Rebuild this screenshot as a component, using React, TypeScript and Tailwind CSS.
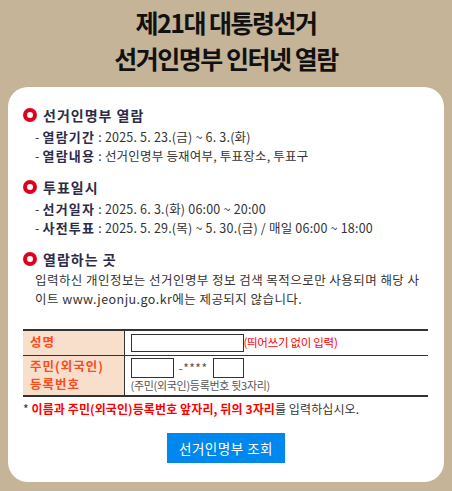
import React from "react";

const font = { fontFamily: '"Noto Sans CJK KR", "Noto Sans", sans-serif' };

function Dot() {
  return (
    <span className="inline-block w-[14px] h-[14px] rounded-full border-[4px] border-[#e1001e] bg-white shrink-0" />
  );
}

function Heading({ children }: { children: React.ReactNode }) {
  return (
    <h3 className="flex items-center gap-[6px] text-[14px] font-bold text-[#2c2c48] tracking-[1px] leading-[20px]">
      <Dot />
      {children}
    </h3>
  );
}

function Item({ label, value }: { label: string; value: string }) {
  return (
    <li className="pl-[12px] text-[12.5px] leading-[19px] text-[#333] tracking-[0.2px]">
      - <b className="text-[#2c2c48] text-[13px] tracking-[1.2px]">{label}</b>
      <span className="px-[3px]">:</span>
      {value}
    </li>
  );
}

export default function App() {
  return (
    <div className="w-[452px] h-[491px] bg-[#c5b497] overflow-hidden" style={font}>
      <div className="pt-[4px] text-center text-[#111] font-bold text-[25px] leading-[36px] tracking-[-1.5px]">
        <p>제21대 대통령선거</p>
        <p>선거인명부 인터넷 열람</p>
      </div>

      <div className="mx-[8px] mt-[11px] h-[395px] bg-white rounded-[20px] px-[15px] pt-[18px]">
        <Heading>선거인명부 열람</Heading>
        <ul className="mt-[2px]">
          <Item label="열람기간" value="2025. 5. 23.(금) ~ 6. 3.(화)" />
          <Item label="열람내용" value="선거인명부 등재여부, 투표장소, 투표구" />
        </ul>

        <div className="mt-[12px]">
          <Heading>투표일시</Heading>
        </div>
        <ul className="mt-[2px]">
          <Item label="선거일자" value="2025. 6. 3.(화) 06:00 ~ 20:00" />
          <Item label="사전투표" value="2025. 5. 29.(목) ~ 5. 30.(금) / 매일 06:00 ~ 18:00" />
        </ul>

        <div className="mt-[12px]">
          <Heading>열람하는 곳</Heading>
        </div>
        <p className="mt-[1px] pl-[12px] pr-[2px] text-[12.5px] leading-[19px] text-[#333] tracking-[0.45px]">
          입력하신 개인정보는 선거인명부 정보 검색 목적으로만 사용되며 해당 사이트 www.jeonju.go.kr에는 제공되지 않습니다.
        </p>

        <table className="mt-[21px] w-[405px] border-collapse border-t-[2px] border-b-[2px] border-[#333]">
          <tbody>
            <tr className="border-b border-[#333] h-[25px]">
              <th className="w-[101px] bg-[#f8dfcc] text-left pl-[7px] text-[12.5px] font-bold text-[#ff4a1c] tracking-[1px] border-r border-[#333]">
                성명
              </th>
              <td className="pl-[6px]">
                <div className="flex items-center">
                  <span className="inline-block w-[113px] h-[18px] border border-[#333] bg-white" />
                  <span className="text-[11.5px] text-[#ff0000] tracking-[-0.3px]">(띄어쓰기 없이 입력)</span>
                </div>
              </td>
            </tr>
            <tr className="h-[41px]">
              <th className="bg-[#f8dfcc] text-left pl-[7px] text-[12.5px] font-bold text-[#ff4a1c] leading-[18px] tracking-[1px] border-r border-[#333]">
                주민(외국인)
                <br />
                등록번호
              </th>
              <td className="pl-[6px]">
                <div className="flex items-center gap-[5px]">
                  <span className="inline-block w-[43px] h-[20px] border border-[#333] bg-white" />
                  <span className="text-[12px] text-[#555] tracking-[0.5px]">-****</span>
                  <span className="inline-block w-[31px] h-[20px] border border-[#333] bg-white" />
                </div>
                <p className="text-[11px] text-[#555] leading-[14px] tracking-[-0.3px]">(주민(외국인)등록번호 뒷3자리)</p>
              </td>
            </tr>
          </tbody>
        </table>

        <p className="mt-[4px] text-[12px] leading-[16px] text-[#333] tracking-[0.1px]">
          * <b className="text-[#ff0000]">이름과 주민(외국인)등록번호 앞자리, 뒤의 3자리</b>를 입력하십시오.
        </p>

        <div className="flex justify-center mt-[16px]">
          <button className="w-[118px] h-[30px] bg-[#0088ee] text-white text-[13.5px] tracking-[0.5px]">
            선거인명부 조회
          </button>
        </div>
      </div>
    </div>
  );
}
